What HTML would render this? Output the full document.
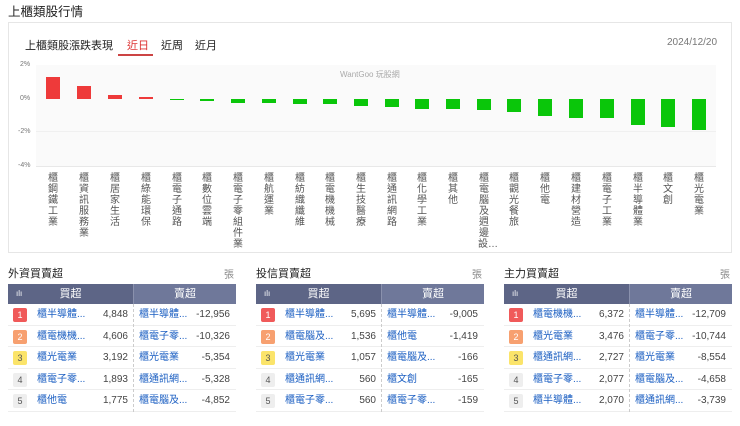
<!DOCTYPE html>
<html><head><meta charset="utf-8"><style>
*{margin:0;padding:0;box-sizing:border-box}
body{width:740px;height:426px;background:#fff;font-family:"Liberation Sans","Noto Sans CJK TC",sans-serif;position:relative;overflow:hidden;color:#333}
.a{position:absolute;white-space:nowrap}
.card{position:absolute;left:8px;top:22px;width:724px;height:231px;border:1px solid #e6e6e6}
.lbl{position:absolute;top:173px;width:12px;font-size:10px;line-height:11px;color:#555;text-align:center;white-space:normal;word-break:break-all}
.bar{position:absolute;width:14px}
.r{background:#ee3a3a}.g{background:#0ac60a}
.pn{position:absolute;top:262px;width:228px;height:160px}
.pn .t{position:absolute;left:0;top:3px;font-size:11px;color:#222}
.pn .u{position:absolute;right:2px;top:4px;font-size:10px;color:#888}
.hd{position:absolute;top:22px;left:0;width:228px;height:20px;background:#5d6586;color:#fff;font-size:11px}
.hd .l{position:absolute;left:0;top:0;width:125px;height:20px;text-align:center;line-height:20px}
.hd .rr{position:absolute;left:125px;top:0;width:103px;height:20px;background:#6f789a;text-align:center;line-height:20px;border-left:1px solid #8a91ad}
.hd .ic{position:absolute;left:8px;top:0;font-size:8px;line-height:20px}
.row{position:absolute;left:0;width:228px;height:21.5px;border-bottom:1px solid #eee;font-size:10px;line-height:21px}
.row .b{position:absolute;left:5px;top:4px;width:14px;height:14px;font-size:9px;line-height:14px;text-align:center;border-radius:2px;color:#555;background:#eee}
.row .n{position:absolute;left:29px;color:#1a5ec2}
.row .v{position:absolute;right:108px;color:#444}
.row .n2{position:absolute;left:131px;color:#1a5ec2}
.row .v2{position:absolute;right:6px;color:#444}
.dv{position:absolute;left:125px;top:42px;height:108px;border-left:1px dashed #ccc}
</style></head><body>
<div class="a" style="left:8px;top:1px;font-size:12.5px;color:#222">上櫃類股行情</div>
<div class="card"></div>
<div class="a" style="left:25px;top:37px;font-size:11px;color:#222">上櫃類股漲跌表現</div>
<div class="a" style="left:127px;top:37px;font-size:11px;color:#d33">近日</div>
<div class="a" style="left:118px;top:54px;width:35px;height:2px;background:#c44"></div>
<div class="a" style="left:161px;top:37px;font-size:11px;color:#222">近周</div>
<div class="a" style="left:195px;top:37px;font-size:11px;color:#222">近月</div>
<div class="a" style="left:667px;top:37px;font-size:10px;color:#777">2024/12/20</div>
<div class="a" style="left:36px;top:65px;width:680px;height:101px;background:#fafafa"></div>
<div class="a" style="left:36px;top:131px;width:680px;height:1px;background:#f0f0f0"></div>
<div class="a" style="left:36px;top:166px;width:680px;height:1px;background:#e8e8e8"></div>
<div class="a" style="left:20px;top:61px;font-size:7px;color:#777">2%</div>
<div class="a" style="left:20px;top:95px;font-size:7px;color:#777">0%</div>
<div class="a" style="left:18px;top:128px;font-size:7px;color:#777">-2%</div>
<div class="a" style="left:18px;top:162px;font-size:7px;color:#777">-4%</div>
<div class="a" style="left:340px;top:69px;font-size:8px;color:#aaa">WantGoo 玩股網</div>
<div class="bar r" style="left:46px;top:77px;height:22px"></div>
<div class="bar r" style="left:77px;top:86px;height:13px"></div>
<div class="bar r" style="left:108px;top:95px;height:4px"></div>
<div class="bar r" style="left:139px;top:97px;height:2px"></div>
<div class="bar g" style="left:170px;top:99px;height:1px"></div>
<div class="bar g" style="left:200px;top:99px;height:2px"></div>
<div class="bar g" style="left:231px;top:99px;height:4px"></div>
<div class="bar g" style="left:262px;top:99px;height:4px"></div>
<div class="bar g" style="left:293px;top:99px;height:5px"></div>
<div class="bar g" style="left:323px;top:99px;height:5px"></div>
<div class="bar g" style="left:354px;top:99px;height:7px"></div>
<div class="bar g" style="left:385px;top:99px;height:8px"></div>
<div class="bar g" style="left:415px;top:99px;height:10px"></div>
<div class="bar g" style="left:446px;top:99px;height:10px"></div>
<div class="bar g" style="left:477px;top:99px;height:11px"></div>
<div class="bar g" style="left:507px;top:99px;height:13px"></div>
<div class="bar g" style="left:538px;top:99px;height:17px"></div>
<div class="bar g" style="left:569px;top:99px;height:19px"></div>
<div class="bar g" style="left:600px;top:99px;height:19px"></div>
<div class="bar g" style="left:631px;top:99px;height:26px"></div>
<div class="bar g" style="left:661px;top:99px;height:28px"></div>
<div class="bar g" style="left:692px;top:99px;height:31px"></div>
<div class="lbl" style="left:47px">櫃鋼鐵工業</div>
<div class="lbl" style="left:78px">櫃資訊服務業</div>
<div class="lbl" style="left:109px">櫃居家生活</div>
<div class="lbl" style="left:140px">櫃綠能環保</div>
<div class="lbl" style="left:171px">櫃電子通路</div>
<div class="lbl" style="left:201px">櫃數位雲端</div>
<div class="lbl" style="left:232px">櫃電子零組件業</div>
<div class="lbl" style="left:263px">櫃航運業</div>
<div class="lbl" style="left:294px">櫃紡織纖維</div>
<div class="lbl" style="left:324px">櫃電機機械</div>
<div class="lbl" style="left:355px">櫃生技醫療</div>
<div class="lbl" style="left:386px">櫃通訊網路</div>
<div class="lbl" style="left:416px">櫃化學工業</div>
<div class="lbl" style="left:447px">櫃其他</div>
<div class="lbl" style="left:478px">櫃電腦及週邊設…</div>
<div class="lbl" style="left:508px">櫃觀光餐旅</div>
<div class="lbl" style="left:539px">櫃他電</div>
<div class="lbl" style="left:570px">櫃建材營造</div>
<div class="lbl" style="left:601px">櫃電子工業</div>
<div class="lbl" style="left:632px">櫃半導體業</div>
<div class="lbl" style="left:662px">櫃文創</div>
<div class="lbl" style="left:693px">櫃光電業</div>

<div class="pn" style="left:8px">
<div class="t">外資買賣超</div><div class="u">張</div>
<div class="hd"><span class="ic">ılı</span><div class="l">買超</div><div class="rr">賣超</div></div>
<div class="row" style="top:42px"><span class="b" style="background:#f05a5a;color:#fff">1</span><span class="n">櫃半導體...</span><span class="v">4,848</span><span class="n2">櫃半導體...</span><span class="v2">-12,956</span></div>
<div class="row" style="top:63.5px"><span class="b" style="background:#f7a070;color:#fff">2</span><span class="n">櫃電機機...</span><span class="v">4,606</span><span class="n2">櫃電子零...</span><span class="v2">-10,326</span></div>
<div class="row" style="top:85px"><span class="b" style="background:#fbe46a">3</span><span class="n">櫃光電業</span><span class="v">3,192</span><span class="n2">櫃光電業</span><span class="v2">-5,354</span></div>
<div class="row" style="top:106.5px"><span class="b">4</span><span class="n">櫃電子零...</span><span class="v">1,893</span><span class="n2">櫃通訊網...</span><span class="v2">-5,328</span></div>
<div class="row" style="top:128px"><span class="b">5</span><span class="n">櫃他電</span><span class="v">1,775</span><span class="n2">櫃電腦及...</span><span class="v2">-4,852</span></div>
<div class="dv"></div>
</div>

<div class="pn" style="left:256px">
<div class="t">投信買賣超</div><div class="u">張</div>
<div class="hd"><span class="ic">ılı</span><div class="l">買超</div><div class="rr">賣超</div></div>
<div class="row" style="top:42px"><span class="b" style="background:#f05a5a;color:#fff">1</span><span class="n">櫃半導體...</span><span class="v">5,695</span><span class="n2">櫃半導體...</span><span class="v2">-9,005</span></div>
<div class="row" style="top:63.5px"><span class="b" style="background:#f7a070;color:#fff">2</span><span class="n">櫃電腦及...</span><span class="v">1,536</span><span class="n2">櫃他電</span><span class="v2">-1,419</span></div>
<div class="row" style="top:85px"><span class="b" style="background:#fbe46a">3</span><span class="n">櫃光電業</span><span class="v">1,057</span><span class="n2">櫃電腦及...</span><span class="v2">-166</span></div>
<div class="row" style="top:106.5px"><span class="b">4</span><span class="n">櫃通訊網...</span><span class="v">560</span><span class="n2">櫃文創</span><span class="v2">-165</span></div>
<div class="row" style="top:128px"><span class="b">5</span><span class="n">櫃電子零...</span><span class="v">560</span><span class="n2">櫃電子零...</span><span class="v2">-159</span></div>
<div class="dv"></div>
</div>

<div class="pn" style="left:504px">
<div class="t">主力買賣超</div><div class="u">張</div>
<div class="hd"><span class="ic">ılı</span><div class="l">買超</div><div class="rr">賣超</div></div>
<div class="row" style="top:42px"><span class="b" style="background:#f05a5a;color:#fff">1</span><span class="n">櫃電機機...</span><span class="v">6,372</span><span class="n2">櫃半導體...</span><span class="v2">-12,709</span></div>
<div class="row" style="top:63.5px"><span class="b" style="background:#f7a070;color:#fff">2</span><span class="n">櫃光電業</span><span class="v">3,476</span><span class="n2">櫃電子零...</span><span class="v2">-10,744</span></div>
<div class="row" style="top:85px"><span class="b" style="background:#fbe46a">3</span><span class="n">櫃通訊網...</span><span class="v">2,727</span><span class="n2">櫃光電業</span><span class="v2">-8,554</span></div>
<div class="row" style="top:106.5px"><span class="b">4</span><span class="n">櫃電子零...</span><span class="v">2,077</span><span class="n2">櫃電腦及...</span><span class="v2">-4,658</span></div>
<div class="row" style="top:128px"><span class="b">5</span><span class="n">櫃半導體...</span><span class="v">2,070</span><span class="n2">櫃通訊網...</span><span class="v2">-3,739</span></div>
<div class="dv"></div>
</div>
</body></html>
